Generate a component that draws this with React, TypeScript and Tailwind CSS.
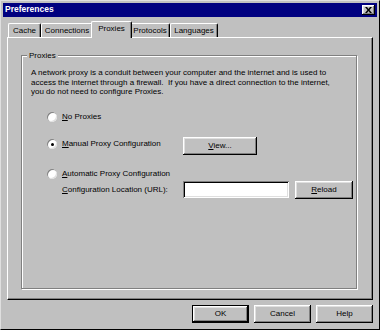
import React from "react";

const FONT = "font-['Liberation_Sans',Arial,sans-serif]";
const RAISED =
  "shadow-[inset_-1px_-1px_0_#000,inset_1px_1px_0_#fff,inset_-2px_-2px_0_#808080,inset_2px_2px_0_#dfdfdf]";
const SUNKEN =
  "shadow-[inset_1px_1px_0_#808080,inset_-1px_-1px_0_#fff,inset_2px_2px_0_#000,inset_-2px_-2px_0_#dfdfdf]";

function Tab({ label, active, w }: { label: string; active?: boolean; w: string }) {
  if (active) {
    return (
      <div
        className={`${w} -mx-[2px] h-[17px] relative z-10 -mb-[1px] flex items-start justify-center pt-[2px] bg-[#c0c0c0] border-t border-l border-white border-r border-r-black rounded-t-[2px] shadow-[inset_-1px_0_0_#808080]`}
      >
        {label}
      </div>
    );
  }
  return (
    <div
      className={`${w} h-[14px] flex items-center justify-center bg-[#c0c0c0] border-t border-l border-white border-r border-r-black rounded-t-[2px] shadow-[inset_-1px_0_0_#808080]`}
    >
      {label}
    </div>
  );
}

function Radio({ checked }: { checked?: boolean }) {
  return (
    <span className="w-[10px] h-[10px] rounded-full bg-white flex items-center justify-center shrink-0 shadow-[inset_1px_1px_0_#808080,inset_-1px_-1px_0_#dfdfdf]">
      {checked && <span className="w-[3px] h-[3px] rounded-full bg-black" />}
    </span>
  );
}

function Button({ children, w, isDefault }: { children: React.ReactNode; w: string; isDefault?: boolean }) {
  return (
    <div className={`${w} shrink-0 h-[18px] flex items-center justify-center bg-[#c0c0c0] ${isDefault ? "border border-black" : ""}`}>
      <div className={`w-full h-full flex items-center justify-center ${RAISED}`}>{children}</div>
    </div>
  );
}

export default function App() {
  return (
    <div
      className={`${FONT} text-[8px] leading-[9.5px] text-black w-[380px] h-[330px] bg-[#c0c0c0] p-[2px] flex flex-col border-t border-l border-[#dfdfdf] border-r border-b border-r-black border-b-black`}
    >
      {/* Title bar */}
      <div className="h-[14px] bg-[#000080] flex items-center justify-between pl-[2px] pr-[2px]">
        <span className="text-white font-bold text-[8.5px]">Preferences</span>
        <div className={`w-[13px] h-[10px] bg-[#c0c0c0] flex items-center justify-center ${RAISED}`}>
          <svg width="7" height="6" viewBox="0 0 7 6">
            <path d="M0 0 L2 0 L3.5 2 L5 0 L7 0 L4.5 3 L7 6 L5 6 L3.5 4 L2 6 L0 6 L2.5 3 Z" fill="#000" />
          </svg>
        </div>
      </div>

      {/* Tabs */}
      <div className="mt-[4px] pl-[4px] pr-[4px] flex flex-col">
        <div className="flex items-end pl-[1px] h-[16px]">
          <Tab label="Cache" w="w-[33px]" />
          <Tab label="Connections" w="w-[52px]" />
          <Tab label="Proxies" w="w-[41px]" active />
          <Tab label="Protocols" w="w-[40px]" />
          <Tab label="Languages" w="w-[48px]" />
        </div>

        {/* Panel */}
        <div className="h-[263px] border-t border-l border-white border-r border-b border-r-black border-b-black shadow-[inset_-1px_-1px_0_#808080] pt-[17px] pl-[13px] pr-[15px] pb-[10px] flex flex-col">
          <div className="relative flex-1 border border-[#808080] shadow-[1px_1px_0_#fff,inset_1px_1px_0_#fff] pl-[9px] pt-[12px] flex flex-col">
            <span className="absolute -top-[5px] left-[5px] bg-[#c0c0c0] px-[2px]">Proxies</span>
            <p>
              A network proxy is a conduit between your computer and the internet and is used to
              <br />
              access the internet through a firewall.&nbsp; If you have a direct connection to the internet,
              <br />
              you do not need to configure Proxies.
            </p>

            <div className="mt-[15px] pl-[16px] flex flex-col">
              <div className="flex items-center gap-[5px] h-[10px]">
                <Radio />
                <span>
                  <u>N</u>o Proxies
                </span>
              </div>

              <div className="mt-[15px] flex items-center h-[18px]">
                <div className="flex items-center gap-[5px] w-[136px] shrink-0 -mt-[3px]">
                  <Radio checked />
                  <span>
                    <u>M</u>anual Proxy Configuration
                  </span>
                </div>
                <Button w="w-[74px]">
                  <span>
                    <u>V</u>iew...
                  </span>
                </Button>
              </div>

              <div className="mt-[14px] flex items-center gap-[5px] h-[10px]">
                <Radio checked={false} />
                <span>
                  <u>A</u>utomatic Proxy Configuration
                </span>
              </div>

              <div className="mt-[2px] flex items-center h-[18px]">
                <span className="w-[136px] shrink-0 pl-[15px]">
                  <u>C</u>onfiguration Location (URL):
                </span>
                <div className={`w-[106px] shrink-0 h-[17px] bg-white ${SUNKEN}`} />
                <div className="ml-[6px]">
                  <Button w="w-[58px]">
                    <span>
                      <u>R</u>eload
                    </span>
                  </Button>
                </div>
              </div>
            </div>
          </div>
        </div>
      </div>

      {/* Bottom buttons */}
      <div className="mt-[5px] flex justify-end gap-[5px] pr-[4px]">
        <Button w="w-[57px]" isDefault>
          OK
        </Button>
        <Button w="w-[57px]">Cancel</Button>
        <Button w="w-[57px]">Help</Button>
      </div>
    </div>
  );
}
